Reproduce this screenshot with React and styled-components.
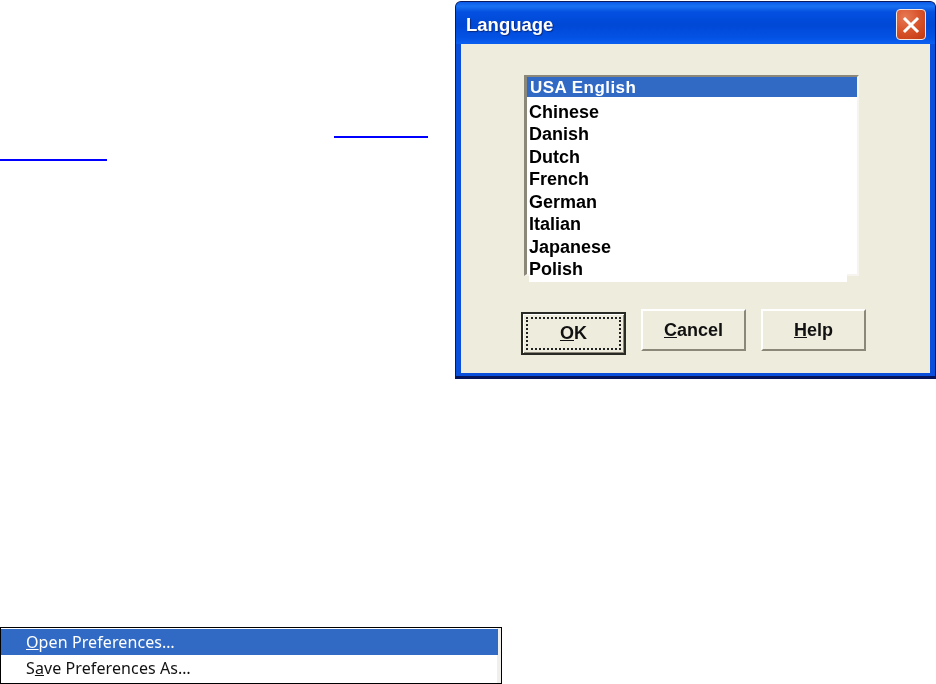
import styled, { createGlobalStyle } from 'styled-components';

const LANGUAGES = ['USA English', 'Chinese', 'Danish', 'Dutch', 'French', 'German', 'Italian', 'Japanese', 'Polish'];

export default function App() {
  return (
    <Page>
      <GlobalStyle />
      <TopRow>
        <Notes>
          <LinkLine href="#" $indent={334} $width={94} aria-label="link" />
          <LinkLine href="#" $indent={0} $width={107} aria-label="link" />
        </Notes>
        <Dialog>
          <TitleBar>
            <Title>Language</Title>
            <CloseButton aria-label="Close">
              <svg width="18" height="18" viewBox="0 0 18 18">
                <path d="M3 3 L15 15 M15 3 L3 15" stroke="#fff" strokeWidth="3" strokeLinecap="square" fill="none" />
              </svg>
            </CloseButton>
          </TitleBar>
          <Client>
            <ListBox>
              {LANGUAGES.map((name, index) => (
                <ListRow key={name} $selected={index === 0}>{name}</ListRow>
              ))}
            </ListBox>
            <ListTail />
            <Buttons>
              <DefaultButton>
                <FocusRing><u>O</u>K</FocusRing>
              </DefaultButton>
              <DialogButton><u>C</u>ancel</DialogButton>
              <DialogButton><u>H</u>elp</DialogButton>
            </Buttons>
          </Client>
        </Dialog>
      </TopRow>
      <Menu>
        <MenuItem $selected><u>O</u>pen Preferences…</MenuItem>
        <MenuItem>S<u>a</u>ve Preferences As…</MenuItem>
      </Menu>
    </Page>
  );
}

const GlobalStyle = createGlobalStyle`
  html, body {
    margin: 0;
    padding: 0;
    background: #fff;
    overflow: hidden;
  }
`;

const Page = styled.div`
  width: 936px;
  height: 684px;
  display: flex;
  flex-direction: column;
  font-family: "Liberation Sans", Arial, sans-serif;
`;

const TopRow = styled.div`
  display: flex;
  align-items: flex-start;
  padding-top: 1px;
`;

const Notes = styled.div`
  width: 455px;
  flex-shrink: 0;
  padding-top: 135px;
  display: flex;
  flex-direction: column;
  gap: 21px;
`;

const LinkLine = styled.a`
  display: block;
  height: 2px;
  width: ${(p) => p.$width}px;
  margin-left: ${(p) => p.$indent}px;
  background: #0000ff;
`;

const Dialog = styled.div`
  width: 481px;
  height: 378px;
  box-sizing: border-box;
  display: flex;
  flex-direction: column;
  background: #0a4fdc;
  border: 1px solid #0a1a5a;
  border-bottom: 3px solid #06155a;
  border-radius: 6px 6px 0 0;
  padding: 0 5px 3px 5px;
`;

const TitleBar = styled.div`
  height: 42px;
  flex-shrink: 0;
  margin: 0 -5px;
  padding: 3px 9px 0 10px;
  box-sizing: border-box;
  border-radius: 5px 5px 0 0;
  display: flex;
  align-items: center;
  justify-content: space-between;
  background: linear-gradient(180deg, #0a5be8 0%, #1a72f2 10%, #0450e0 24%, #0048d6 55%, #0352e4 85%, #0a5ff0 100%);
`;

const Title = styled.div`
  color: #fff;
  font-size: 18.5px;
  font-weight: 700;
  text-shadow: 1px 1px 1px #0a2a80;
  filter: blur(0.45px);
`;

const CloseButton = styled.div`
  width: 28px;
  height: 29px;
  border: 1px solid #f4e8e0;
  border-radius: 4px;
  display: flex;
  align-items: center;
  justify-content: center;
  background: radial-gradient(circle at 30% 25%, #e67a54 0%, #d8522a 50%, #c03810 100%);
`;

const Client = styled.div`
  flex: 1;
  display: flex;
  flex-direction: column;
  background: #eeecdd;
  padding: 31px 0 0 63px;
`;

const ListBox = styled.div`
  width: 335px;
  height: 201px;
  box-sizing: border-box;
  background: #fff;
  border-top: 2px solid #8b8779;
  border-left: 3px solid #8b8779;
  border-right: 2px solid #f7f3ee;
  border-bottom: 2px solid #f7f3ee;
`;

const ListRow = styled.div`
  height: ${(p) => (p.$selected ? 20 : 22.5)}px;
  line-height: ${(p) => (p.$selected ? 22 : 22.5)}px;
  margin-bottom: ${(p) => (p.$selected ? 3.5 : 0)}px;
  margin-left: ${(p) => (p.$selected ? 0 : 2)}px;
  padding-left: ${(p) => (p.$selected ? 3 : 0)}px;
  font-size: ${(p) => (p.$selected ? 17 : 18)}px;
  font-weight: 700;
  letter-spacing: ${(p) => (p.$selected ? 0.45 : 0)}px;
  color: ${(p) => (p.$selected ? '#fff' : '#000')};
  background: ${(p) => (p.$selected ? '#316ac5' : 'transparent')};
  white-space: nowrap;
  filter: blur(0.4px);
`;

const ListTail = styled.div`
  width: 318px;
  height: 8px;
  margin: -2px 0 0 5px;
  background: #fff;
`;

const Buttons = styled.div`
  display: flex;
  align-items: flex-start;
  gap: 15px;
  margin: 27px 0 0 -3px;
`;

const DialogButton = styled.div`
  width: 105px;
  height: 42px;
  box-sizing: border-box;
  display: flex;
  align-items: center;
  justify-content: center;
  background: #eeecdd;
  border-top: 2px solid #fff;
  border-left: 2px solid #fff;
  border-right: 2px solid #8b8779;
  border-bottom: 2px solid #8b8779;
  font-size: 18px;
  font-weight: 700;
  color: #111;
  filter: blur(0.4px);
`;

const DefaultButton = styled(DialogButton)`
  height: 43px;
  margin-top: 3px;
  padding: 3px;
  border: 2px solid #2a2a24;
  box-shadow: inset 1px 1px 0 #fff, inset -1px -1px 0 #8b8779;
`;

const FocusRing = styled.div`
  flex: 1;
  align-self: stretch;
  display: flex;
  align-items: center;
  justify-content: center;
  border: 2px dotted #222;
`;

const Menu = styled.div`
  width: 502px;
  height: 57px;
  box-sizing: border-box;
  margin-top: 248px;
  padding: 1px 0 0 0;
  background: #fff;
  border: 1px solid #000;
  box-shadow: inset -4px 0 0 #f0efec;
`;

const MenuItem = styled.div`
  width: 497px;
  height: 26px;
  line-height: 26px;
  padding-left: 25px;
  box-sizing: border-box;
  font-family: "Noto Sans", "Liberation Sans", sans-serif;
  font-size: 16px;
  letter-spacing: 0.1px;
  color: ${(p) => (p.$selected ? '#fff' : '#111')};
  background: ${(p) => (p.$selected ? '#316ac5' : 'transparent')};
  white-space: nowrap;
  filter: blur(0.3px);
`;
